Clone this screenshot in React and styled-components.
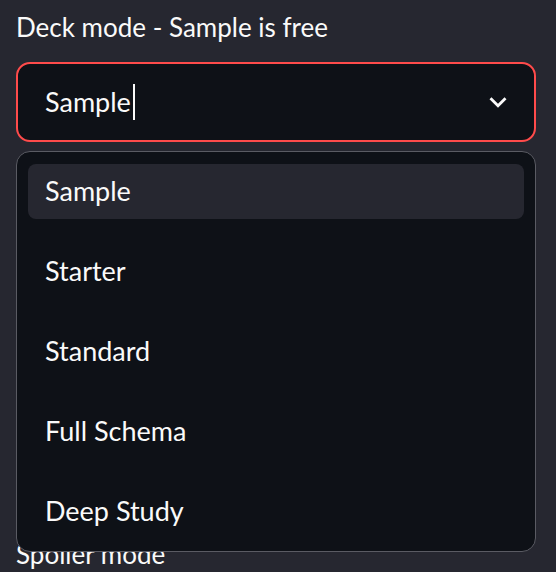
import React from "react";
import styled, { createGlobalStyle, css } from "styled-components";

const GlobalStyle = createGlobalStyle`
  html, body {
    margin: 0;
    padding: 0;
    background: #262730;
    overflow: hidden;
  }
  * { box-sizing: border-box; }
`;

const Sidebar = styled.div`
  width: 556px;
  height: 572px;
  padding: 12px 20px 0 16px;
  font-family: Lato, "Liberation Sans", sans-serif;
  color: #fafafa;
  display: flex;
  flex-direction: column;
`;

const Field = styled.div`
  display: flex;
  flex-direction: column;
  gap: 19px;
  margin-top: ${(p) => p.$offset || 0}px;
`;

const Label = styled.label`
  font-size: 26px;
  line-height: 1.2;
  color: #fafafa;
`;

const SelectWrap = styled.div`
  position: relative;
`;

const SelectBox = styled.div`
  height: 80px;
  border-radius: 14px;
  background: #0e1117;
  border: 2px solid ${(p) => (p.$focused ? "#ff4b4b" : "#3d3f47")};
  display: flex;
  align-items: center;
  justify-content: space-between;
  padding: 0 19px 0 27px;
`;

const Value = styled.div`
  display: flex;
  align-items: center;
  font-size: 27px;
  line-height: 1.2;
  color: #fafafa;
`;

const Caret = styled.span`
  display: inline-block;
  width: 2px;
  height: 36px;
  margin-left: 2px;
  background: #fafafa;
`;

const Menu = styled.ul`
  position: absolute;
  top: calc(100% + 9px);
  left: 0;
  right: 0;
  margin: 0;
  list-style: none;
  background: #0e1117;
  border: 1px solid #5a5b63;
  border-radius: 14px;
  padding: 12px 11px;
  display: flex;
  flex-direction: column;
  gap: 25px;
  z-index: 10;
`;

const Option = styled.li`
  height: 55px;
  border-radius: 8px;
  padding-left: 17px;
  display: flex;
  align-items: center;
  font-size: 27px;
  line-height: 1.2;
  color: #fafafa;
  ${(p) =>
    p.$active &&
    css`
      background: #262730;
    `}
`;

const Chevron = () => (
  <svg width="34" height="34" viewBox="0 0 24 24" fill="#fafafa" aria-hidden="true">
    <path d="M16.59 8.59L12 13.17 7.41 8.59 6 10l6 6 6-6z" />
  </svg>
);

const options = ["Sample", "Starter", "Standard", "Full Schema", "Deep Study"];

export default function App() {
  return (
    <>
      <GlobalStyle />
      <Sidebar>
        <Field>
          <Label>Deck mode - Sample is free</Label>
          <SelectWrap>
            <SelectBox $focused>
              <Value>
                Sample
                <Caret />
              </Value>
              <Chevron />
            </SelectBox>
            <Menu role="listbox">
              {options.map((o, i) => (
                <Option key={o} $active={i === 0} role="option">
                  {o}
                </Option>
              ))}
            </Menu>
          </SelectWrap>
        </Field>
        <Field $offset={397}>
          <Label>Spoiler mode</Label>
        </Field>
      </Sidebar>
    </>
  );
}
